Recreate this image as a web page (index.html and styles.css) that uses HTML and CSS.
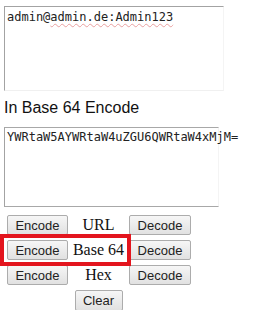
FILE: index.html
```html
<!DOCTYPE html>
<html lang="en">
<head>
  <meta charset="UTF-8" />
  <title>Base 64 Encode</title>
  <link rel="stylesheet" href="styles.css">
</head>
<body>
  <div class="page">
    <div class="box box-input">admin@<span class="typo">admin.de:Admin123</span></div>

    <h2 class="title">In Base 64 Encode</h2>

    <div class="box box-output">YWRtaW5AYWRtaW4uZGU6QWRtaW4xMjM=</div>

    <!-- Encode / decode controls -->
    <div class="controls">
      <button class="btn">Encode</button>
      <span class="label">URL</span>
      <button class="btn">Decode</button>

      <button class="btn">Encode</button>
      <span class="label">Base 64</span>
      <button class="btn">Decode</button>

      <button class="btn">Encode</button>
      <span class="label">Hex</span>
      <button class="btn">Decode</button>

      <span></span>
      <button class="btn btn-clear">Clear</button>
      <span></span>

      <div class="highlight"></div>
    </div>
  </div>
</body>
</html>
```

FILE: styles.css
```css
/* Basic page styling */
body {
  margin: 0;
  padding: 0;
  background: #fff;
  font-family: "Liberation Sans", Arial, sans-serif;
}
.page {
  display: flex;
  flex-direction: column;
  padding: 6px 0 0 4px;
}

/* Text areas */
.box {
  font-family: "DejaVu Sans Mono", monospace;
  font-size: 12px;
  line-height: 14px;
  color: #222;
  border: 1px solid #a3a3a3;
  border-right-color: #f4f4f4;
  white-space: nowrap;
}
.box-input {
  width: 216px;
  height: 80px;
  padding: 3px 0 0 2px;
  border-bottom-color: #f0f0f0;
}
.box-output {
  width: 211px;
  height: 76px;
  padding: 2px 0 0 2px;
  border-top-color: #a8a8a8;
  border-bottom-color: #a8a8a8;
}
.typo {
  text-decoration: underline wavy #e8a0a0;
  text-decoration-thickness: 1px;
  text-underline-offset: 2px;
}

.title {
  font-size: 16px;
  font-weight: normal;
  line-height: 18px;
  color: #111;
  margin: 8px 0 10px 0;
}

/* Button grid */
.controls {
  position: relative;
  display: grid;
  grid-template-columns: 61px 61px 62px;
  grid-auto-rows: 20px;
  row-gap: 5px;
  margin: 8px 0 0 3px;
}
.btn {
  font-family: "Liberation Sans", Arial, sans-serif;
  font-size: 13px;
  color: #222;
  margin: 0;
  padding: 0;
  border: 1px solid #acacac;
  border-radius: 2px;
  background: linear-gradient(#f6f6f6, #e1e1e1);
}
.btn-clear {
  justify-self: center;
  width: 48px;
  height: 21px;
}
.label {
  font-family: "Liberation Serif", "Times New Roman", serif;
  font-size: 16px;
  color: #111;
  text-align: center;
  line-height: 20px;
}
.highlight {
  position: absolute;
  left: -7px;
  top: 19px;
  width: 123px;
  height: 24px;
  border: 4px solid #e3151e;
  pointer-events: none;
}
```
